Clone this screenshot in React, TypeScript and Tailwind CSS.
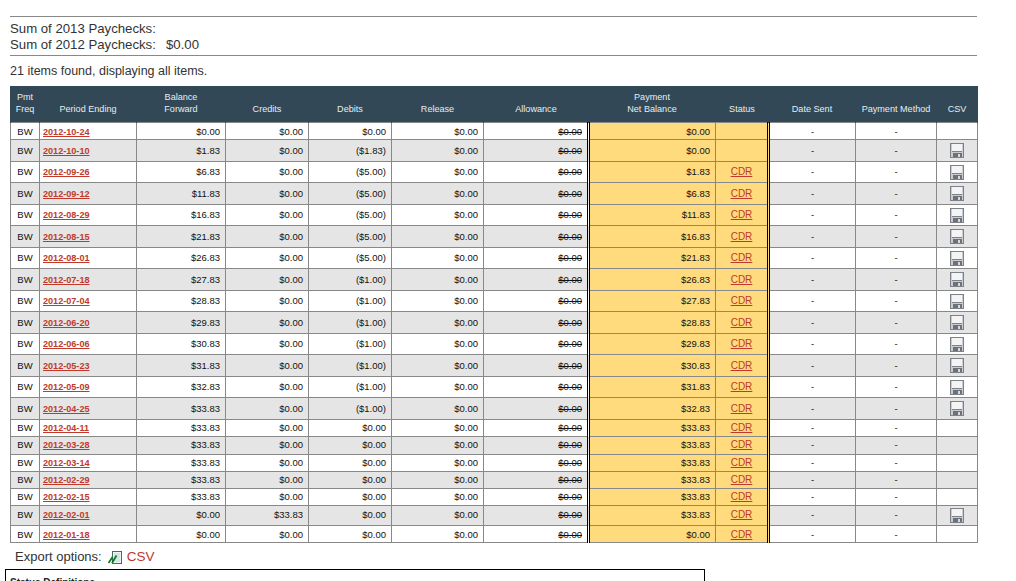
const rows = [
  { date: "2012-10-24", bal: "$0.00", cred: "$0.00", deb: "$0.00", net: "$0.00", cdr: false, csv: false, h: "h-[17px] [&>td]:pt-px" },
  { date: "2012-10-10", bal: "$1.83", cred: "$0.00", deb: "($1.83)", net: "$0.00", cdr: false, csv: true, h: "h-[22px]" },
  { date: "2012-09-26", bal: "$6.83", cred: "$0.00", deb: "($5.00)", net: "$1.83", cdr: true, csv: true, h: "h-[21px]" },
  { date: "2012-09-12", bal: "$11.83", cred: "$0.00", deb: "($5.00)", net: "$6.83", cdr: true, csv: true, h: "h-[22px]" },
  { date: "2012-08-29", bal: "$16.83", cred: "$0.00", deb: "($5.00)", net: "$11.83", cdr: true, csv: true, h: "h-[21px]" },
  { date: "2012-08-15", bal: "$21.83", cred: "$0.00", deb: "($5.00)", net: "$16.83", cdr: true, csv: true, h: "h-[22px]" },
  { date: "2012-08-01", bal: "$26.83", cred: "$0.00", deb: "($5.00)", net: "$21.83", cdr: true, csv: true, h: "h-[21px]" },
  { date: "2012-07-18", bal: "$27.83", cred: "$0.00", deb: "($1.00)", net: "$26.83", cdr: true, csv: true, h: "h-[22px]" },
  { date: "2012-07-04", bal: "$28.83", cred: "$0.00", deb: "($1.00)", net: "$27.83", cdr: true, csv: true, h: "h-[21px]" },
  { date: "2012-06-20", bal: "$29.83", cred: "$0.00", deb: "($1.00)", net: "$28.83", cdr: true, csv: true, h: "h-[22px]" },
  { date: "2012-06-06", bal: "$30.83", cred: "$0.00", deb: "($1.00)", net: "$29.83", cdr: true, csv: true, h: "h-[21px]" },
  { date: "2012-05-23", bal: "$31.83", cred: "$0.00", deb: "($1.00)", net: "$30.83", cdr: true, csv: true, h: "h-[22px]" },
  { date: "2012-05-09", bal: "$32.83", cred: "$0.00", deb: "($1.00)", net: "$31.83", cdr: true, csv: true, h: "h-[21px]" },
  { date: "2012-04-25", bal: "$33.83", cred: "$0.00", deb: "($1.00)", net: "$32.83", cdr: true, csv: true, h: "h-[22px]" },
  { date: "2012-04-11", bal: "$33.83", cred: "$0.00", deb: "$0.00", net: "$33.83", cdr: true, csv: false, h: "h-[17px] [&>td]:pb-px" },
  { date: "2012-03-28", bal: "$33.83", cred: "$0.00", deb: "$0.00", net: "$33.83", cdr: true, csv: false, h: "h-[18px] [&>td]:pb-px" },
  { date: "2012-03-14", bal: "$33.83", cred: "$0.00", deb: "$0.00", net: "$33.83", cdr: true, csv: false, h: "h-[17px] [&>td]:pb-px" },
  { date: "2012-02-29", bal: "$33.83", cred: "$0.00", deb: "$0.00", net: "$33.83", cdr: true, csv: false, h: "h-[17px] [&>td]:pb-px" },
  { date: "2012-02-15", bal: "$33.83", cred: "$0.00", deb: "$0.00", net: "$33.83", cdr: true, csv: false, h: "h-[17px] [&>td]:pb-px" },
  { date: "2012-02-01", bal: "$0.00", cred: "$33.83", deb: "$0.00", net: "$33.83", cdr: true, csv: true, h: "h-[20px] [&>td]:pb-px" },
  { date: "2012-01-18", bal: "$0.00", cred: "$0.00", deb: "$0.00", net: "$0.00", cdr: true, csv: false, h: "h-[17px] [&>td]:pt-px" },
];

function FloppyIcon() {
  return (
    <svg width="14" height="15" viewBox="0 0 14 15" className="mx-auto block" shapeRendering="crispEdges">
      <rect x="0" y="0" width="14" height="15" fill="#7d8289" />
      <rect x="1" y="1" width="12" height="13" fill="#c9ccd1" />
      <rect x="2" y="1" width="10" height="7" fill="#f4f4f4" />
      <rect x="2" y="8" width="10" height="1" fill="#7d8289" />
      <rect x="3" y="10" width="9" height="4" fill="#6d7178" />
      <rect x="8" y="11" width="2" height="3" fill="#d8dade" />
    </svg>
  );
}

function ExportIcon() {
  return (
    <svg width="14" height="15" viewBox="0 0 14 15" className="inline-block">
      <rect x="4.5" y="1.5" width="9" height="12" fill="#eef4f4" stroke="#4a6a6a" />
      <rect x="6" y="3" width="6" height="9" fill="#d6e6e6" />
      <path d="M0.5 13 L4.5 7 M4 13 L8.5 5.5" stroke="#0c7a22" strokeWidth="1.8" fill="none" />
    </svg>
  );
}

export default function App() {
  const cell = "border border-[#888] text-right pr-[5px]";
  const mid = "border border-[#888] text-center";
  const head = "border-x border-t border-[#324857] font-normal align-bottom pb-[7px]";
  return (
    <div className="h-[581px] overflow-hidden bg-white pl-[5px] font-['Liberation_Sans',Arial,sans-serif] text-[#222]">
      <div className="ml-[5px] w-[967px] pt-4">
        <div className="border-y border-[#888] mb-[7px] h-10 pt-[4px] text-[13.2px] leading-4 text-[#333]">
          <div>Sum of 2013 Paychecks:</div>
          <div className="flex">
            <span className="w-[156px]">Sum of 2012 Paychecks:</span>
            <span>$0.00</span>
          </div>
        </div>
        <p className="text-[12.5px] leading-4 text-[#333] mb-[7px]">21 items found, displaying all items.</p>

        <table className="table-fixed w-[967px] border-collapse text-[9.5px] leading-3 text-[#111]">
          <colgroup>
            <col className="w-[29px]" />
            <col className="w-[97px]" />
            <col className="w-[89px]" />
            <col className="w-[83px]" />
            <col className="w-[83px]" />
            <col className="w-[92px]" />
            <col className="w-[105px]" />
            <col className="w-[127px]" />
            <col className="w-[53px]" />
            <col className="w-[87px]" />
            <col className="w-[81px]" />
            <col className="w-[41px]" />
          </colgroup>
          <thead>
            <tr className="h-9 bg-[#324857] text-[9.1px] text-[#e6edf2]">
              <th className={head}>Pmt<br />Freq</th>
              <th className={head}>Period Ending</th>
              <th className={head}>Balance<br />Forward</th>
              <th className={head}>Credits</th>
              <th className={head}>Debits</th>
              <th className={head}>Release</th>
              <th className={head}>Allowance</th>
              <th className={head}>Payment<br />Net Balance</th>
              <th className={head}>Status</th>
              <th className={head}>Date Sent</th>
              <th className={head}>Payment Method</th>
              <th className={head}>CSV</th>
            </tr>
          </thead>
          <tbody>
            {rows.map((r, i) => (
              <tr key={r.date} className={`${r.h} ${i % 2 === 1 ? "bg-[#e5e5e5]" : "bg-white"}`}>
                <td className={mid}>BW</td>
                <td className="border border-[#888] pl-[3px] text-[9.1px]">
                  <a className="font-bold text-[#c0392b] underline">{r.date}</a>
                </td>
                <td className={cell}>{r.bal}</td>
                <td className={cell}>{r.cred}</td>
                <td className={cell}>{r.deb}</td>
                <td className={cell}>$0.00</td>
                <td className={cell}><s>$0.00</s></td>
                <td className="border border-[#888] border-l-[3px] border-l-black border-double bg-[#ffdb7d] text-right pr-[5px]">{r.net}</td>
                <td className="border border-[#888] border-r-[3px] border-r-black border-double bg-[#ffdb7d] text-center text-[10px]">
                  {r.cdr && <a className="text-[#c0392b] underline">CDR</a>}
                </td>
                <td className={mid}>-</td>
                <td className={mid}>-</td>
                <td className="border border-[#888] p-0">{r.csv && <FloppyIcon />}</td>
              </tr>
            ))}
          </tbody>
        </table>

        <div className="ml-[5px] mt-[5px] flex h-[18px] items-center text-[13px] text-[#333]">
          <span>Export options:</span>
          <span className="ml-[6px] mr-[5px] flex"><ExportIcon /></span>
          <a className="text-[13.5px] text-[#c0392b]">CSV</a>
        </div>
      </div>
      <div className="mt-[3px] h-24 w-[700px] border border-black px-1 pt-[5px] text-[10px] font-bold leading-4">
        Status Definitions
      </div>
    </div>
  );
}
